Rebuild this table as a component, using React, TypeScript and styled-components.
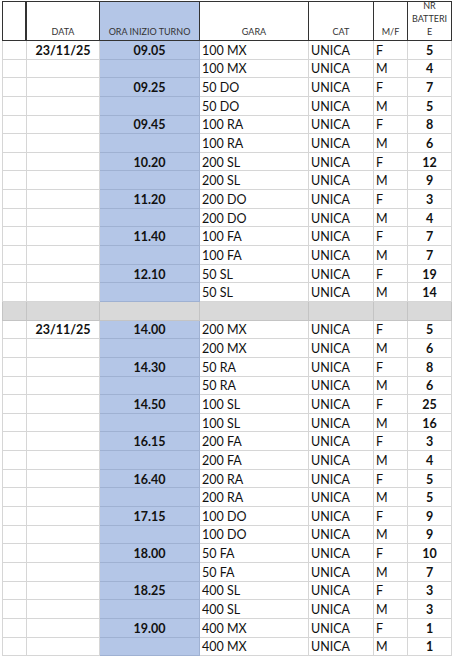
import React from 'react';
import styled, { createGlobalStyle } from 'styled-components';

type Heat = [string, string, number, number];

const morning: Heat[] = [
  ['09.05', '100 MX', 5, 4],
  ['09.25', '50 DO', 7, 5],
  ['09.45', '100 RA', 8, 6],
  ['10.20', '200 SL', 12, 9],
  ['11.20', '200 DO', 3, 4],
  ['11.40', '100 FA', 7, 7],
  ['12.10', '50 SL', 19, 14],
];

const afternoon: Heat[] = [
  ['14.00', '200 MX', 5, 6],
  ['14.30', '50 RA', 8, 6],
  ['14.50', '100 SL', 25, 16],
  ['16.15', '200 FA', 3, 4],
  ['16.40', '200 RA', 5, 5],
  ['17.15', '100 DO', 9, 9],
  ['18.00', '50 FA', 10, 7],
  ['18.25', '400 SL', 3, 3],
  ['19.00', '400 MX', 1, 1],
];

const GlobalStyle = createGlobalStyle`
  body {
    margin: 0;
    background: #ffffff;
    font-family: Lato, "Liberation Sans", sans-serif;
  }
`;

const Page = styled.div`
  padding: 1px 0 0 2px;
`;

const Sheet = styled.div`
  display: grid;
  grid-template-columns: 25px 73px 100px 109px 65px 34px 44px;
  grid-template-rows: 40px;
  grid-auto-rows: 18.65px;
  width: 450px;
`;

const HeadCell = styled.div<{ $first?: boolean; $blue?: boolean }>`
  display: flex;
  align-items: flex-end;
  justify-content: center;
  text-align: center;
  box-sizing: border-box;
  padding-bottom: 2px;
  border-top: 1px solid #333333;
  border-bottom: 1px solid #333333;
  border-left: ${(p) => (p.$first ? '1px solid #333333' : 'none')};
  border-right: ${(p) => (p.$first ? '2px' : '1px')} solid #333333;
  background: ${(p) => (p.$blue ? '#b4c6e7' : '#ffffff')};
  color: #333333;
  font-size: 9px;
  line-height: 13px;
  white-space: nowrap;
`;

type Tone = 'plain' | 'blue' | 'grey';

const fills: Record<Tone, string> = {
  plain: '#ffffff',
  blue: '#b4c6e7',
  grey: '#d9d9d9',
};

const lines: Record<Tone, string> = {
  plain: '#d6d6d6',
  blue: '#9fb1d2',
  grey: '#c4c4c4',
};

const Cell = styled.div<{ $tone?: Tone; $center?: boolean; $bold?: boolean; $first?: boolean }>`
  display: flex;
  align-items: center;
  justify-content: ${(p) => (p.$center ? 'center' : 'flex-start')};
  box-sizing: border-box;
  padding: 1px 2px 0 2px;
  border-left: ${(p) => (p.$first ? `1px solid ${lines[p.$tone ?? 'plain']}` : 'none')};
  border-right: 1px solid ${(p) => lines[p.$tone ?? 'plain']};
  border-bottom: 1px solid ${(p) => lines[p.$tone ?? 'plain']};
  background: ${(p) => fills[p.$tone ?? 'plain']};
  color: #111111;
  font-size: 12.5px;
  font-weight: ${(p) => (p.$bold ? 700 : 400)};
  white-space: nowrap;
`;

const Block: React.FC<{ date: string; heats: Heat[] }> = ({ date, heats }) => (
  <>
    {heats.map(([time, race, f, m], i) => (
      <React.Fragment key={time}>
        <Cell $first />
        <Cell $center $bold>{i === 0 ? date : ''}</Cell>
        <Cell $tone="blue" $center $bold>{time}</Cell>
        <Cell>{race}</Cell>
        <Cell>UNICA</Cell>
        <Cell>F</Cell>
        <Cell $center $bold>{f}</Cell>

        <Cell $first />
        <Cell />
        <Cell $tone="blue" />
        <Cell>{race}</Cell>
        <Cell>UNICA</Cell>
        <Cell>M</Cell>
        <Cell $center $bold>{m}</Cell>
      </React.Fragment>
    ))}
  </>
);

const App: React.FC = () => (
  <Page>
    <GlobalStyle />
    <Sheet>
      <HeadCell $first />
      <HeadCell>DATA</HeadCell>
      <HeadCell $blue>ORA INIZIO TURNO</HeadCell>
      <HeadCell>GARA</HeadCell>
      <HeadCell>CAT</HeadCell>
      <HeadCell>M/F</HeadCell>
      <HeadCell>
        NR
        <br />
        BATTERI
        <br />E
      </HeadCell>

      <Block date="23/11/25" heats={morning} />

      {Array.from({ length: 7 }, (_, i) => (
        <Cell key={i} $tone="grey" $first={i === 0} />
      ))}

      <Block date="23/11/25" heats={afternoon} />
    </Sheet>
  </Page>
);

export default App;
